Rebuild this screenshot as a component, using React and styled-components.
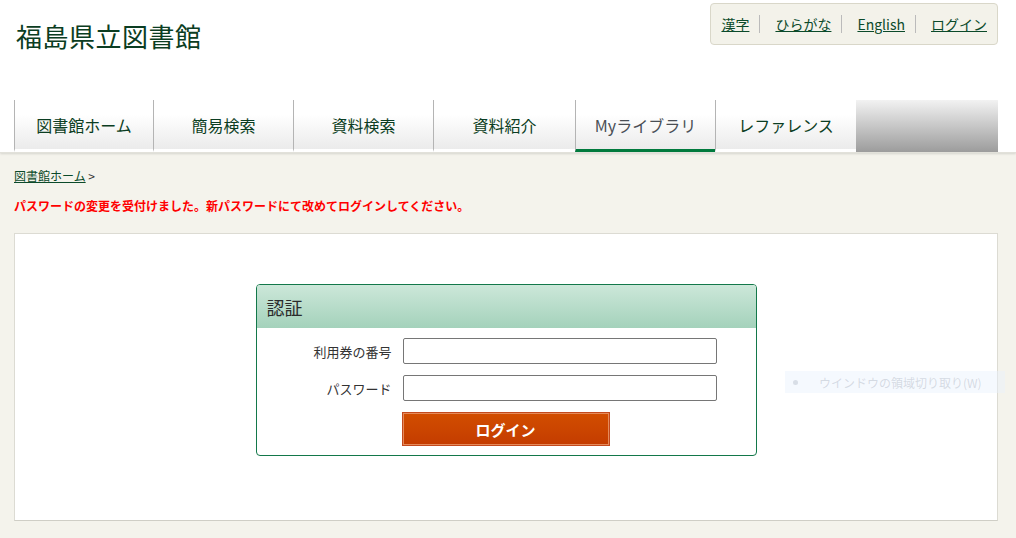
import styled, { createGlobalStyle } from 'styled-components'

const GlobalStyle = createGlobalStyle`
  html, body {
    margin: 0;
    padding: 0;
    background: #f4f3ec;
    font-family: "Noto Sans CJK JP", "Noto Sans", sans-serif;
  }
`

const Page = styled.div`
  width: 1016px;
  min-height: 538px;
  position: relative;
  overflow: hidden;
`

const Header = styled.header`
  background: #fff;
  height: 152px;
  position: relative;
  box-shadow: 0 1px 2px rgba(0, 0, 0, 0.12);
  border-bottom: 1px solid #e2e1da;
`

const TopRow = styled.div`
  display: flex;
  justify-content: space-between;
  align-items: flex-start;
  padding: 3px 18px 0 16px;
  height: 100px;
  box-sizing: border-box;
`

const SiteTitle = styled.h1`
  margin: 14px 0 0;
  font-size: 26px;
  font-weight: 400;
  color: #0b3d22;
  letter-spacing: 0.5px;
`

const LangBox = styled.div`
  display: flex;
  align-items: center;
  height: 42px;
  padding: 0 10px;
  background: #f3f2ea;
  border: 1px solid #d9d7c9;
  border-radius: 4px;
  box-sizing: border-box;
`

const LangLink = styled.a`
  font-size: 14px;
  color: #0b4a2a;
  text-decoration: underline;
  padding: 0 10px 0 ${(p) => (p.$first ? '0' : '15px')};
  border-right: ${(p) => (p.$last ? 'none' : '1px solid #bbb')};
  line-height: 18px;
  &:last-child {
    padding-right: 0;
  }
`

const Nav = styled.nav`
  display: flex;
  margin: 0 18px 0 14px;
  height: 52px;
`

const Tab = styled.a`
  width: ${(p) => p.$w}px;
  display: flex;
  align-items: center;
  justify-content: center;
  box-sizing: border-box;
  border-left: 1px solid #b4b4b4;
  background: linear-gradient(#ffffff 30%, #ebebeb);
  font-size: 16px;
  color: ${(p) => (p.$active ? '#4a4f55' : '#0b3d22')};
  text-decoration: none;
  padding-top: 1px;
  border-bottom: 3px solid ${(p) => (p.$active ? '#007a3d' : 'transparent')};
`

const NavFill = styled.div`
  flex: 1;
  background: linear-gradient(#f2f2f2, #9c9c9c);
`

const Main = styled.main`
  padding: 14px 18px 0 14px;
`

const Crumb = styled.div`
  font-size: 12px;
  color: #333;
  a {
    color: #0b4a2a;
    text-decoration: underline;
  }
`

const Notice = styled.p`
  margin: 13px 0 0;
  font-size: 12px;
  font-weight: 700;
  color: #f00;
`

const Panel = styled.section`
  margin-top: 19px;
  background: #fff;
  border: 1px solid #dcdbd3;
  border-bottom-color: #cfcec6;
  height: 288px;
  box-sizing: border-box;
  padding-top: 50px;
  display: flex;
  justify-content: center;
`

const LoginBox = styled.div`
  width: 501px;
  height: 172px;
  box-sizing: border-box;
  border: 1px solid #13784a;
  border-radius: 4px;
  overflow: hidden;
`

const BoxHead = styled.div`
  height: 43px;
  background: linear-gradient(#cce7d9, #a4d2bb);
  display: flex;
  align-items: center;
  padding-left: 10px;
  font-size: 18px;
  color: #2b2b2b;
`

const Form = styled.div`
  display: grid;
  grid-template-columns: 135px 314px;
  column-gap: 11px;
  row-gap: 11px;
  padding-top: 10px;
  align-items: center;
`

const Label = styled.label`
  text-align: right;
  font-size: 13px;
  color: #333;
`

const Input = styled.input`
  height: 26px;
  box-sizing: border-box;
  border: 1px solid #767676;
  border-radius: 2px;
  margin: 0;
`

const Button = styled.button`
  grid-column: 2;
  justify-self: start;
  margin-left: -1px;
  width: 208px;
  height: 34px;
  background: linear-gradient(#d24e00, #c43c00);
  border: 1px solid #c34a1e;
  box-shadow: inset 0 0 0 1px #e58a5a;
  color: #fff;
  font-family: inherit;
  font-size: 15px;
  font-weight: 700;
  cursor: pointer;
`

const Ghost = styled.div`
  position: absolute;
  left: 785px;
  top: 371px;
  width: 220px;
  height: 22px;
  background: rgba(232, 242, 252, 0.45);
  display: flex;
  align-items: center;
  font-size: 12px;
  color: rgba(150, 160, 175, 0.35);
  span {
    width: 5px;
    height: 5px;
    border-radius: 50%;
    background: rgba(150, 160, 175, 0.3);
    margin: 0 21px 0 8px;
  }
`

const tabs = [
  { label: '図書館ホーム', w: 139 },
  { label: '簡易検索', w: 140 },
  { label: '資料検索', w: 140 },
  { label: '資料紹介', w: 142 },
  { label: 'Myライブラリ', w: 140, active: true },
  { label: 'レファレンス', w: 141 },
]

const langs = ['漢字', 'ひらがな', 'English', 'ログイン']

export default function App() {
  return (
    <Page>
      <GlobalStyle />
      <Header>
        <TopRow>
          <SiteTitle>福島県立図書館</SiteTitle>
          <LangBox>
            {langs.map((l, i) => (
              <LangLink key={l} href="#" $first={i === 0} $last={i === langs.length - 1}>
                {l}
              </LangLink>
            ))}
          </LangBox>
        </TopRow>
        <Nav>
          {tabs.map((t) => (
            <Tab key={t.label} href="#" $w={t.w} $active={t.active}>
              {t.label}
            </Tab>
          ))}
          <NavFill />
        </Nav>
      </Header>
      <Main>
        <Crumb>
          <a href="#">図書館ホーム</a> &gt;
        </Crumb>
        <Notice>パスワードの変更を受付けました。新パスワードにて改めてログインしてください。</Notice>
        <Panel>
          <LoginBox>
            <BoxHead>認証</BoxHead>
            <Form>
              <Label>利用券の番号</Label>
              <Input type="text" />
              <Label>パスワード</Label>
              <Input type="password" />
              <Button>ログイン</Button>
            </Form>
          </LoginBox>
        </Panel>
      </Main>
      <Ghost>
        <span />
        ウインドウの領域切り取り(W)
      </Ghost>
    </Page>
  )
}
